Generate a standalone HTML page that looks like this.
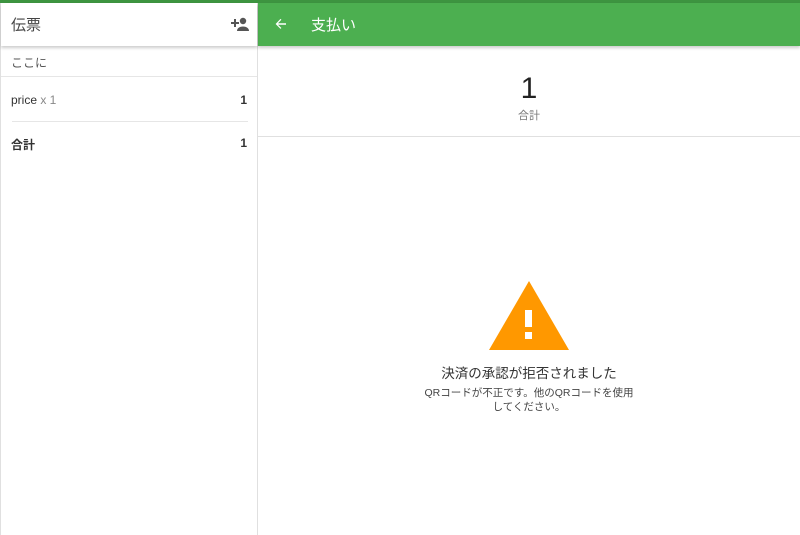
<!DOCTYPE html>
<html><head><meta charset="utf-8"><style>
*{margin:0;padding:0;box-sizing:border-box}
body{width:800px;height:535px;overflow:hidden;background:#fff;font-family:"Liberation Sans","Noto Sans CJK JP",sans-serif;position:relative;color:#333}
.top{position:absolute;left:0;top:0;width:800px;height:3px;background:#3d9440}
.left{position:absolute;left:0;top:3px;width:258px;height:532px;border-left:1px solid #e0e0e0;border-right:1px solid #e0e0e0}
.lh{height:43px;background:#fff;box-shadow:0 2px 3px rgba(0,0,0,.2);position:relative;z-index:2}
.lh span{position:absolute;left:10px;top:11px;font-size:15px;color:#444}
.lh svg{position:absolute;left:230px;top:14px}
.here{height:31px;border-bottom:1px solid #e6e6e6;font-size:12px;color:#555;padding:8px 0 0 10px}
.row{position:absolute;left:10px;width:236px;font-size:12px}
.row b{position:absolute;right:0;top:0}
.sep{position:absolute;left:11px;width:236px;top:118px;height:1px;background:#e6e6e6}
.gh{position:absolute;left:258px;top:3px;width:542px;height:43px;background:#4caf50;box-shadow:0 2px 3px rgba(0,0,0,.2)}
.gh span{position:absolute;left:53px;top:11px;color:#fff;font-size:15px}
.gh svg{position:absolute;left:17px;top:15px}
.tot{position:absolute;left:258px;top:46px;width:542px;height:91px;border-bottom:1px solid #e0e0e0;text-align:center}
.tot .n{font-size:30px;color:#222;margin-top:27px;line-height:32px}
.tot .l{font-size:11px;color:#777;margin-top:2px}
.msg{position:absolute;left:258px;top:362px;width:542px;text-align:center}
</style></head><body>
<div class="top"></div>
<div class="left">
<div class="lh"><span>伝票</span>
<svg width="18" height="14" viewBox="0 0 18 14"><path d="M3 2v3H0v2h3v3h2V7h3V5H5V2z" fill="#555"/><circle cx="12" cy="4" r="3.2" fill="#555"/><path d="M6 14c0-3 3-4.5 6-4.5s6 1.5 6 4.5z" fill="#555"/></svg></div>
<div class="here">ここに</div>
<div class="row" style="top:90px">price <span style="color:#888">x 1</span><b>1</b></div>
<div class="sep"></div>
<div class="row" style="top:133px;font-weight:bold">合計<b>1</b></div>
</div>
<div class="gh"><svg width="12" height="12" viewBox="0 0 12 12"><path d="M11 5.2H3l3.4-3.4-.9-.9L.6 6l4.9 4.9.9-.9L3 6.8h8z" fill="#fff"/></svg><span>支払い</span></div>
<div class="tot"><div class="n">1</div><div class="l">合計</div></div>
<svg style="position:absolute;left:489px;top:281px" width="80" height="69" viewBox="0 0 80 69"><path d="M40 0L80 69H0z" fill="#ff9800"/><rect x="36" y="29" width="7" height="17" fill="#fff"/><rect x="36" y="51" width="7" height="7" fill="#fff"/></svg>
<div class="msg"><div style="font-size:13.5px;color:#333">決済の承認が拒否されました</div>
<div style="font-size:10.5px;color:#444;line-height:14px;margin-top:4px">QRコードが不正です。他のQRコードを使用<br>してください。</div></div>
</body></html>
